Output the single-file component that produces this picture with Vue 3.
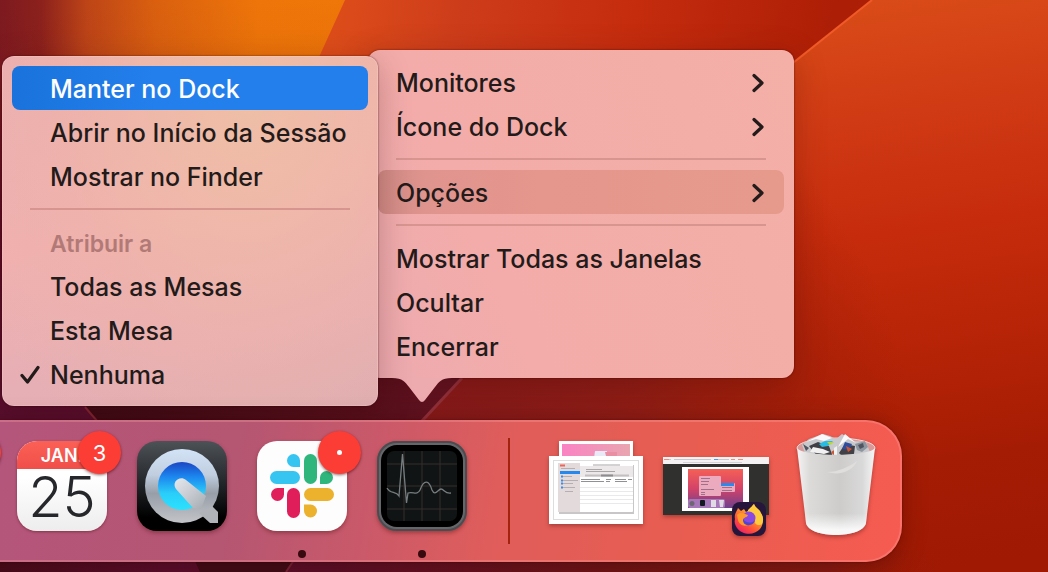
<script setup>
const submenu = [
  { label: 'Manter no Dock', active: true },
  { label: 'Abrir no Início da Sessão' },
  { label: 'Mostrar no Finder' },
  { separator: true },
  { heading: 'Atribuir a' },
  { label: 'Todas as Mesas' },
  { label: 'Esta Mesa' },
  { label: 'Nenhuma', checked: true },
]

const menu = [
  { label: 'Monitores', more: true },
  { label: 'Ícone do Dock', more: true },
  { separator: true },
  { label: 'Opções', more: true, open: true },
  { separator: true },
  { label: 'Mostrar Todas as Janelas' },
  { label: 'Ocultar' },
  { label: 'Encerrar' },
]

const tableRows = [46, 50, 54, 58, 62]
</script>

<template>
  <main class="desktop">
    <svg class="wallpaper" viewBox="0 0 1048 572" preserveAspectRatio="none" aria-hidden="true">
      <defs>
        <linearGradient id="wpGlow" x1="0" y1="0" x2="345" y2="0" gradientUnits="userSpaceOnUse">
          <stop offset="0" stop-color="#7d1a20" />
          <stop offset=".12" stop-color="#8c211c" />
          <stop offset=".25" stop-color="#bd4417" />
          <stop offset=".45" stop-color="#da600f" />
          <stop offset=".75" stop-color="#ee7509" />
          <stop offset="1" stop-color="#ef7608" />
        </linearGradient>
        <linearGradient id="wpShade" x1="0" y1="0" x2="0" y2="420" gradientUnits="userSpaceOnUse">
          <stop offset="0" stop-color="#5a0c26" stop-opacity="0" />
          <stop offset=".15" stop-color="#5a0c26" stop-opacity=".04" />
          <stop offset=".5" stop-color="#5a0c26" stop-opacity=".9" />
          <stop offset="1" stop-color="#5a0f30" />
        </linearGradient>
        <linearGradient id="wpMid" x1="340" y1="0" x2="820" y2="90" gradientUnits="userSpaceOnUse">
          <stop offset="0" stop-color="#dc4c1a" />
          <stop offset=".25" stop-color="#cd3c1a" />
          <stop offset=".6" stop-color="#c52c0e" />
          <stop offset="1" stop-color="#ad1e06" />
        </linearGradient>
        <linearGradient id="wpRight" x1="880" y1="0" x2="960" y2="572" gradientUnits="userSpaceOnUse">
          <stop offset="0" stop-color="#d94b18" />
          <stop offset=".2" stop-color="#d03a14" />
          <stop offset=".4" stop-color="#c62c0c" />
          <stop offset=".62" stop-color="#b52306" />
          <stop offset=".8" stop-color="#a51c04" />
          <stop offset="1" stop-color="#9f1903" />
        </linearGradient>
        <radialGradient id="wpLow" cx="440" cy="480" r="480" gradientUnits="userSpaceOnUse">
          <stop offset="0" stop-color="#82191c" />
          <stop offset=".45" stop-color="#8e1d16" stop-opacity=".95" />
          <stop offset=".75" stop-color="#951c0d" stop-opacity=".5" />
          <stop offset="1" stop-color="#9c1b06" stop-opacity="0" />
        </radialGradient>
        <linearGradient id="wpDeep" x1="85" y1="0" x2="440" y2="0" gradientUnits="userSpaceOnUse">
          <stop offset="0" stop-color="#3f0b16" />
          <stop offset=".2" stop-color="#430c18" />
          <stop offset="1" stop-color="#621320" />
        </linearGradient>
        <linearGradient id="wpFloor" x1="0" y1="0" x2="940" y2="0" gradientUnits="userSpaceOnUse">
          <stop offset="0" stop-color="#470b1a" />
          <stop offset=".18" stop-color="#5a0e2c" />
          <stop offset=".35" stop-color="#5b0f28" />
          <stop offset=".65" stop-color="#701516" />
          <stop offset=".88" stop-color="#861a12" />
          <stop offset="1" stop-color="#9a1b05" stop-opacity="0" />
        </linearGradient>
      </defs>
      <rect width="1048" height="572" fill="url(#wpRight)" />
      <rect width="1048" height="572" fill="url(#wpLow)" />
      <path d="M345 0H872L794 62L600 230H300L320 55Z" fill="url(#wpMid)" />
      <path d="M0 0H345L320 55L150 430H0Z" fill="url(#wpGlow)" />
      <path d="M0 0H345L320 55L150 430H0Z" fill="url(#wpShade)" />
      <path d="M872 0L700 137" fill="none" stroke="#f05a28" stroke-width="2" />
      <path d="M462 378L422 420L300 572H190L85 405V360H470Z" fill="url(#wpDeep)" />
      <path d="M85 407L97 421" fill="none" stroke="#872838" stroke-width="2" />
      <path d="M462 378L422 421" fill="none" stroke="#93303a" stroke-width="3" />
      <path d="M0 550H960V572H0Z" fill="url(#wpFloor)" />
      <path d="M190 550H300L286 572H200Z" fill="#400b16" />
      <path d="M294 560L286 572" fill="none" stroke="#792436" stroke-width="2" />
    </svg>

    <nav class="panel menu" aria-label="Menu do aplicativo">
      <template v-for="(entry, i) in menu" :key="i">
        <hr v-if="entry.separator" class="separator" />
        <button v-else type="button" class="item" :class="{ open: entry.open }">
          <span>{{ entry.label }}</span>
          <svg v-if="entry.more" class="chevron" viewBox="0 0 14 20" aria-hidden="true">
            <path d="M3 2.500L11 10L3 17.500" />
          </svg>
        </button>
      </template>
      <svg class="pointer" viewBox="0 0 60 25" aria-hidden="true">
        <path d="M0 0C11 0 13 4 17 9L27 22Q30 26 33 22L43 9C47 4 49 0 60 0Z" />
      </svg>
    </nav>

    <nav class="panel submenu" aria-label="Opções">
      <template v-for="(entry, i) in submenu" :key="i">
        <hr v-if="entry.separator" class="separator" />
        <div v-else-if="entry.heading" class="heading">{{ entry.heading }}</div>
        <button v-else type="button" class="item" :class="{ active: entry.active }">
          <svg v-if="entry.checked" class="check" viewBox="0 0 20 20" aria-hidden="true">
            <path d="M2 10.500L7.500 17L18 2.500" />
          </svg>
          <span>{{ entry.label }}</span>
        </button>
      </template>
    </nav>

    <section class="dock" aria-label="Dock">
      <div class="slot"><span class="badge"></span></div>

      <div class="slot">
        <div class="tile calendar">
          <div class="month">JAN.</div>
          <div class="day">25</div>
        </div>
        <span class="badge">3</span>
      </div>

      <div class="slot">
        <svg class="tile" viewBox="0 0 90 90" aria-hidden="true">
          <defs>
            <linearGradient id="qtBack" x1="0" y1="0" x2="0" y2="1">
              <stop offset="0" stop-color="#4d5257" />
              <stop offset=".5" stop-color="#202326" />
              <stop offset=".85" stop-color="#000" />
            </linearGradient>
            <linearGradient id="qtRing" x1="0" y1="0" x2="0" y2="1">
              <stop offset="0" stop-color="#d3e3f7" />
              <stop offset=".35" stop-color="#c0cedf" />
              <stop offset=".6" stop-color="#979ea8" />
              <stop offset="1" stop-color="#c3c4c8" />
            </linearGradient>
            <linearGradient id="qtLens" x1="0" y1="0" x2="0" y2="1">
              <stop offset="0" stop-color="#1c45c4" />
              <stop offset=".3" stop-color="#1c85ee" />
              <stop offset=".65" stop-color="#2bcdf9" />
              <stop offset="1" stop-color="#2be2fd" />
            </linearGradient>
            <linearGradient id="qtHand" x1="38" y1="38" x2="66" y2="68" gradientUnits="userSpaceOnUse">
              <stop offset="0" stop-color="#e4e7ec" />
              <stop offset=".5" stop-color="#c8ccd2" />
              <stop offset="1" stop-color="#a8adb4" />
            </linearGradient>
          </defs>
          <rect width="90" height="90" rx="20" fill="url(#qtBack)" />
          <circle cx="45" cy="45" r="37" fill="url(#qtRing)" />
          <path d="M62 72L73 82H81V71L75 65Z" fill="#b0b3b8" />
          <circle cx="45" cy="45" r="24" fill="url(#qtLens)" />
          <path d="M39 48C34 41 43 34 49 39L69 55L64 68L56 67Z" fill="url(#qtHand)" />
        </svg>
      </div>

      <div class="slot running">
        <svg class="tile" viewBox="0 0 90 90" aria-hidden="true">
          <rect width="90" height="90" rx="20" fill="#fdfdfd" />
          <path d="M36.500 13a6.500 6.500 0 0 1 6.500 6.500V26h-6.500a6.500 6.500 0 0 1 0-13Z" fill="#36c5f0" />
          <rect x="13" y="30" width="30" height="13" rx="6.500" fill="#36c5f0" />
          <rect x="47" y="13" width="13" height="30" rx="6.500" fill="#2eb67d" />
          <path d="M63 43V36.500a6.500 6.500 0 1 1 6.500 6.500Z" fill="#2eb67d" />
          <path d="M27 47v6.500a6.500 6.500 0 1 1-6.500-6.500Z" fill="#e01e5a" />
          <rect x="30" y="47" width="13" height="30" rx="6.500" fill="#e01e5a" />
          <rect x="47" y="47" width="30" height="13" rx="6.500" fill="#ecb22e" />
          <path d="M47 63.500h6.500a6.500 6.500 0 1 1-6.500 6.500Z" fill="#ecb22e" />
        </svg>
        <span class="badge"><i class="bullet"></i></span>
      </div>

      <div class="slot running">
        <svg class="tile" viewBox="0 0 90 90" aria-hidden="true">
          <rect width="90" height="90" rx="20" fill="#66666a" />
          <rect x="1" y="1" width="88" height="88" rx="19" fill="none" stroke="#4b4c50" stroke-width="2" />
          <rect x="4" y="4" width="82" height="82" rx="16" fill="#000" />
          <rect x="10" y="10" width="70" height="70" rx="7" fill="#101415" />
          <g stroke="#352e2d" stroke-width="1">
            <path v-for="x in [27, 45, 63]" :key="'v' + x" :d="`M${x} 10V80`" />
            <path v-for="y in [23, 45, 68]" :key="'h' + y" :d="`M10 ${y}H80`" />
          </g>
          <path d="M10 47C13 53 19 50 22 55L25.500 13L29.500 62L31 52C36 50 40 55 43 49C47 38 52 39 55 49C58 56 61 48 64 48C67 48 68 53 74 52" fill="none" stroke="#777d7f" stroke-width="1.300" />
        </svg>
      </div>

      <div class="divider"></div>

      <div class="slot">
        <svg class="stack" viewBox="0 0 94 84" aria-hidden="true">
          <defs>
            <linearGradient id="photo" x1="0" y1="0" x2="1" y2="0">
              <stop offset="0" stop-color="#fa83c3" />
              <stop offset="1" stop-color="#e9a5b0" />
            </linearGradient>
          </defs>
          <path d="M10 0H84V20H10Z" fill="#fff" />
          <path d="M13 3H81V20H13Z" fill="url(#photo)" />
          <path d="M46 10H58V17H45Z" fill="#e8eaf8" />
          <path d="M56 11H68V15H57Z" fill="#e98fa4" />
          <rect y="15" width="94" height="68" fill="#fff" />
          <rect x="4.500" y="19.500" width="85" height="59" fill="none" stroke="#ddd" />
          <rect x="10" y="24" width="75" height="49" fill="#c9c6c8" />
          <rect x="9" y="22" width="75" height="49" rx="1" fill="#fff" />
          <path d="M9 22H31V71H9Z" fill="#e3dadb" />
          <path d="M31 25H84V36H31Z" fill="#ece8e9" />
          <path d="M44 24H71" stroke="#a8a5a7" />
          <path d="M37 28.500H53M37 30.500H66" stroke="#aaa6a8" />
          <path d="M36 34.500H80" stroke="#c4bec1" stroke-width="2" />
          <path d="M52 34.500H64" stroke="#8f8c90" stroke-width="2" />
          <path d="M11 31.500H31" stroke="#2588ef" stroke-width="3" />
          <path d="M11 24.500H16" stroke="#ef6659" stroke-width="2" />
          <path d="M12 27.500H26M14 35.500H23M14 39.500H29M14 42.500H24M14 46.500H26M16 50.500H24" stroke="#b5aeb2" />
          <path d="M12 35.500H14M12 39.500H14M12 42.500H14M12 46.500H14" stroke="#3c8de8" stroke-width="2" />
          <path d="M32 38.500H51M32 40.500H55M57 38.500H62M57 40.500H61M66 38.500H77M66 40.500H78M79 38.500H83" stroke="#909095" />
          <path v-for="y in tableRows" :key="y" :d="`M31 ${y}.500H84`" stroke="#e9e9eb" />
        </svg>
      </div>

      <div class="slot">
        <svg class="window" viewBox="0 0 106 84" aria-hidden="true">
          <defs>
            <linearGradient id="shot" x1="0" y1="0" x2="0" y2="1">
              <stop offset="0" stop-color="#f56055" />
              <stop offset=".5" stop-color="#d44268" />
              <stop offset="1" stop-color="#6f408d" />
            </linearGradient>
            <linearGradient id="foxFire" x1="1" y1="0" x2=".3" y2="1">
              <stop offset="0" stop-color="#ffe14a" />
              <stop offset=".4" stop-color="#ffa52a" />
              <stop offset=".75" stop-color="#ff5038" />
              <stop offset="1" stop-color="#f02463" />
            </linearGradient>
          </defs>
          <rect width="106" height="58" fill="#30302f" />
          <rect width="106" height="7" fill="#f5f2f4" />
          <path d="M1 2.500H8M11 2.500H48M52 2.500H66" stroke="#c5c8ce" />
          <path d="M1 2.500H6M68 2.500H72M75 2.500H80" stroke="#ef8c82" />
          <path d="M51 2.500H55" stroke="#4a9ee8" />
          <path d="M20 5.500H79" stroke="#d5d3d8" />
          <rect x="19" y="10" width="67" height="44" fill="#fff" />
          <rect x="25" y="12" width="55" height="39" fill="url(#shot)" />
          <rect x="36" y="19" width="22" height="20" rx="1" fill="#ebaabd" />
          <rect x="57" y="26" width="15" height="9" rx="1" fill="#e9a9c0" />
          <path d="M58 27.500H71" stroke="#288aef" stroke-width="3" />
          <path d="M38 21.500H47M38 24.500H46M38 27.500H45M38 32.500H51M38 35.500H42M38 37.500H42M59 30.500H69M59 33.500H69" stroke="#a0708a" />
          <rect x="25" y="42" width="37" height="9" rx="2" fill="#a678ba" />
          <circle cx="29" cy="46.500" r="2.500" fill="#6b6871" />
          <rect x="37" y="43" width="5" height="6" rx="1" fill="#111820" />
          <path d="M48 43H53V50H48ZM56 43H61L60 50H57Z" fill="#e1dce4" />
          <rect x="69" y="45" width="34" height="34" rx="8" fill="#26163b" />
          <path d="M72 62C71 57 74 54 75 51L78 54L81 52L83 55L86 53C88 50 89 49 91 47C92 51 96 52 97 56C101 59 101 67 97 72C91 79 79 78 74 71C72 68 71 65 72 62Z" fill="url(#foxFire)" />
          <path d="M85 53C88 50 90 49 91 47C92 51 97 52 98 56C100 59 101 63 99 67C97 69 93 68 92 66C93 61 90 57 85 55Z" fill="#ffcb3e" />
          <circle cx="86" cy="61" r="6.500" fill="#8a4ae0" />
          <path d="M80 62C82 66 89 67 92 63C91 69 82 70 80 65Z" fill="#4a47d0" />
          <path d="M74 58C77 54 82 57 85 58C84 61 80 60 80 63C80 66 82 68 85 68C80 70 76 67 75 63Z" fill="#ff9a2c" />
        </svg>
      </div>

      <div class="slot">
        <svg class="trash" viewBox="0 0 80 106" aria-hidden="true">
          <defs>
            <linearGradient id="can" x1="0" y1="0" x2="1" y2="0">
              <stop offset="0" stop-color="#f5f3f3" />
              <stop offset=".16" stop-color="#dcdbda" />
              <stop offset=".55" stop-color="#cdcccb" />
              <stop offset=".84" stop-color="#dad9d9" />
              <stop offset="1" stop-color="#f7f6f6" />
            </linearGradient>
            <linearGradient id="canBase" x1="0" y1="0" x2="0" y2="1">
              <stop offset=".75" stop-color="#fff" stop-opacity="0" />
              <stop offset=".94" stop-color="#fff" stop-opacity=".85" />
            </linearGradient>
          </defs>
          <ellipse cx="40" cy="16" rx="39" ry="10" fill="#d99b99" stroke="#f0dbdb" />
          <path d="M6 13L13 7L27 2L34 4L40 7L46 2L58 9L70 10L74 20L58 27H20L9 21Z" fill="#c8c9cc" />
          <path d="M10 10L26 2L36 6L28 9L20 7ZM42 15L49 2L60 11L52 7Z" fill="#fafafa" />
          <path d="M13 14L22 10L33 14L37 25L21 24ZM43 21L49 12L59 14L58 22L48 26Z" fill="#414047" />
          <path d="M23 12L29 9L37 9L32 14L26 15Z" fill="#28bce2" />
          <path d="M31 10H38L34 13Z" fill="#b8d839" />
          <path d="M49 10L56 12L53 18L46 17Z" fill="#2e4d9c" />
          <path d="M50 14L56 17L52 20ZM35 20L40 17V26Z" fill="#cf5633" />
          <path d="M59 12L69 9L72 15L66 20L61 18Z" fill="#8d959f" />
          <path d="M17 15L27 17L34 20L28 22L14 20ZM38 16L41 14V26H38Z" fill="#f1f1f1" />
          <path d="M62 13L67 11L68 15L64 17ZM7 12L13 16L10 19Z" fill="#50545e" />
          <path d="M1 16C6 25 74 25 79 16L70 91C67 107 13 107 10 91Z" fill="url(#can)" />
          <path d="M1 16C6 25 74 25 79 16L70 91C67 107 13 107 10 91Z" fill="url(#canBase)" />
          <path d="M31 40C42 40 53 35 61 29C57 39 44 44 31 40Z" fill="#dfdedd" />
        </svg>
      </div>
    </section>
  </main>
</template>

<style>
body {
  margin: 0;
}
</style>

<style scoped>
.desktop {
  position: relative;
  min-height: 100vh;
  overflow: hidden;
  background: #a51c04;
  font-family: Inter, "Liberation Sans", sans-serif;
  color: #231a1a;
}

.wallpaper {
  position: absolute;
  inset: 0;
  width: 100%;
  height: 100%;
}

.panel {
  position: absolute;
  box-sizing: border-box;
  padding: 10px;
  border-radius: 12px;
}

.menu {
  left: 368px;
  top: 50px;
  width: 426px;
  background: linear-gradient(65deg, #ecaab0 0%, #f3aca9 30%, #f4afa7 100%);
  box-shadow: 0 0 2px rgba(40, 0, 0, 0.7), 0 8px 32px rgba(50, 0, 0, 0.25);
}

.submenu {
  left: 2px;
  top: 56px;
  width: 376px;
  background:
    radial-gradient(ellipse at 65% 10%, rgba(239, 193, 165, 0.9), rgba(240, 180, 168, 0.5) 55%, transparent 90%),
    linear-gradient(165deg, #e9aeb2 0%, #f0b0b0 45%, #e6afb5 75%, #ddadb2 100%);
  box-shadow:
    inset 0 0 0 1px rgba(255, 220, 215, 0.25),
    0 0 2px rgba(40, 0, 0, 0.7),
    0 8px 32px rgba(50, 0, 0, 0.25);
}

.item {
  position: relative;
  display: flex;
  align-items: center;
  justify-content: space-between;
  box-sizing: border-box;
  width: 100%;
  height: 44px;
  margin: 0;
  padding: 2px 19px 0 18px;
  border: 0;
  border-radius: 8px;
  background: transparent;
  font: inherit;
  font-size: 25px;
  font-weight: 450;
  line-height: 32px;
  color: inherit;
  text-align: left;
  white-space: nowrap;
}

.submenu .item {
  padding-left: 38px;
}

.item.active {
  background: linear-gradient(90deg, #1a73dc, #237fec 40%);
  color: #fff;
}

.item.open {
  background: linear-gradient(90deg, #cf8a85, #e0948e 12%, #e5968d 40%, #e69a8c);
}

.heading {
  display: flex;
  align-items: center;
  box-sizing: border-box;
  height: 44px;
  padding: 4px 38px 0;
  font-size: 23px;
  line-height: 28px;
  font-weight: 600;
  color: #b27a77;
}

.separator {
  height: 2px;
  margin: 10px 18px;
  border: 0;
  background: #d8958f;
}

.chevron {
  width: 14px;
  height: 20px;
}

.chevron path,
.check path {
  fill: none;
  stroke: currentColor;
  stroke-width: 3.2px;
  stroke-linecap: round;
  stroke-linejoin: round;
}

.check {
  position: absolute;
  left: 8px;
  top: 13px;
  width: 20px;
  height: 20px;
}

.pointer {
  position: absolute;
  left: 24px;
  top: 100%;
  width: 60px;
  height: 25px;
  fill: #edabb0;
}

.dock {
  position: absolute;
  left: -124px;
  bottom: 10px;
  display: flex;
  align-items: center;
  box-sizing: border-box;
  height: 142px;
  padding: 0 4px;
  border: 2px solid rgba(255, 170, 170, 0.3);
  border-radius: 36px;
  background: linear-gradient(100deg, #b4557b 12%, #b55672 35%, #c9596a 48%, #df5d5b 60%, #e95d50 80%, #f65b51 100%) border-box;
  box-shadow: 0 0 2px rgba(50, 0, 0, 0.6), 0 4px 24px rgba(50, 0, 0, 0.35);
}

.slot {
  position: relative;
  display: flex;
  align-items: center;
  justify-content: center;
  width: 120px;
  height: 100%;
}

.slot > svg {
  overflow: visible;
  filter: drop-shadow(0 2px 2px rgba(60, 0, 0, 0.35));
}

.running::after {
  content: "";
  position: absolute;
  left: 56px;
  bottom: 2px;
  width: 8px;
  height: 8px;
  border-radius: 50%;
  background: #38090f;
}

.tile {
  width: 90px;
  height: 90px;
  margin-top: -10px;
}

.calendar {
  overflow: hidden;
  border-radius: 20px;
  background: linear-gradient(#fff 40%, #eeedee);
  box-shadow: 0 1px 3px rgba(60, 0, 0, 0.4);
  text-align: center;
}

.month {
  box-sizing: border-box;
  height: 28px;
  padding-top: 2px;
  background: linear-gradient(#fb6056, #f04f49);
  font-size: 18px;
  line-height: 26px;
  font-weight: 600;
  color: #fff;
}

.day {
  font-size: 56px;
  line-height: 56px;
  font-weight: 300;
  color: #26272a;
}

.badge {
  position: absolute;
  left: 76px;
  top: 9px;
  display: flex;
  align-items: center;
  justify-content: center;
  width: 43px;
  height: 43px;
  border-radius: 50%;
  background: #fc3d36;
  box-shadow: 0 1px 3px rgba(60, 0, 0, 0.6);
  font-size: 22px;
  line-height: 28px;
  color: #fff;
}

.bullet {
  width: 5px;
  height: 5px;
  border-radius: 50%;
  background: #fff;
}

.divider {
  width: 2px;
  height: 106px;
  margin: 0 26px;
  background: #a4230f;
}

.stack {
  width: 94px;
  height: 84px;
  margin-top: -16px;
}

.window {
  width: 106px;
  height: 84px;
  margin-top: 16px;
}

.trash {
  width: 80px;
  height: 106px;
  margin-top: -12px;
}
</style>
